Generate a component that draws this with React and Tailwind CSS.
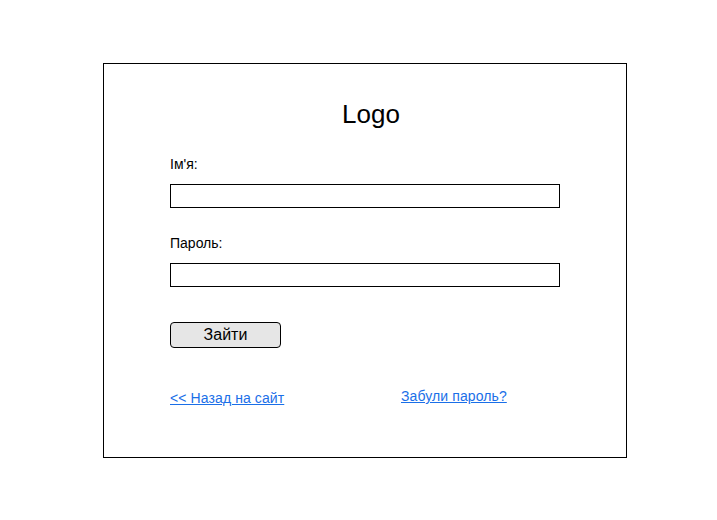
export default function App() {
  return (
    <div className="min-h-[520px] bg-white pl-[103px] pt-[63px] font-['Liberation_Sans',Arial,sans-serif] text-black">
      <div className="w-[524px] h-[395px] border border-black">
        <div className="pl-[66px] pr-[66px] pt-[35px]">
          <h1 className="text-center text-[26px] leading-[30px] pl-[12px]">Logo</h1>

          <form className="mt-[27px]" onSubmit={(e) => e.preventDefault()}>
            <label className="block text-[14px] leading-[16px]">Ім'я:</label>
            <input
              type="text"
              className="mt-[12px] block w-[390px] h-[24px] border border-black outline-none"
            />

            <label className="mt-[27px] block text-[14px] leading-[16px]">Пароль:</label>
            <input
              type="password"
              className="mt-[12px] block w-[390px] h-[24px] border border-black outline-none"
            />

            <button
              type="submit"
              className="mt-[35px] block w-[111px] h-[26px] rounded-[4px] border border-black bg-[#e6e6e6] text-[16px] leading-[18px]"
            >
              Зайти
            </button>
          </form>

          <div className="mt-[40px] flex text-[14px] leading-[16px] text-[#1a6fe8] tracking-[0.1px]">
            <a href="#" className="underline w-[231px] pt-[2px]">&lt;&lt; Назад на сайт</a>
            <a href="#" className="underline">Забули пароль?</a>
          </div>
        </div>
      </div>
    </div>
  )
}
